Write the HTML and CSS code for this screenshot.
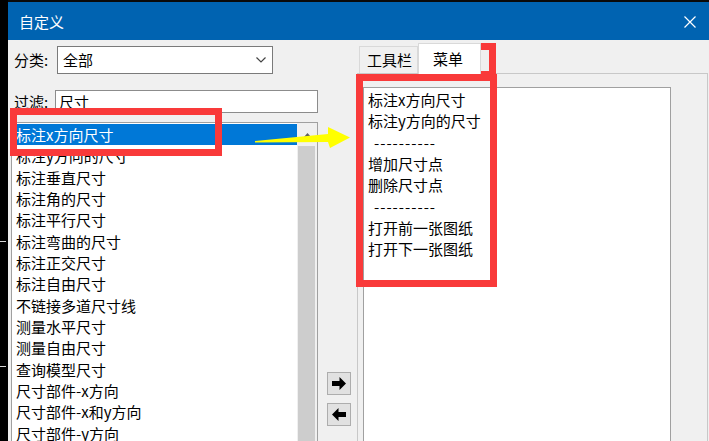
FILE: index.html
```html
<!DOCTYPE html>
<html lang="zh-CN">
<head>
<meta charset="utf-8">
<title>自定义</title>
<link rel="stylesheet" href="styles.css">
</head>
<body>
<div class="desk">
  <div class="strip"><span class="tick"></span><span class="tick tick-2"></span></div>
  <div class="dialog">
    <div class="titlebar">
      <span class="title">自定义</span>
      <span class="close"><svg width="12" height="12" viewBox="0 0 12 12"><path d="M0.5 0.5 L11.5 11.5 M11.5 0.5 L0.5 11.5" stroke="#fff" stroke-width="1.2" fill="none"/></svg></span>
    </div>
    <div class="client">
      <div class="left">
        <div class="field field-cat">
          <span class="label">分类:</span>
          <div class="combo"><span>全部</span><svg width="10" height="6" viewBox="0 0 10 6"><polyline points="0.5,0.5 5,5 9.5,0.5" fill="none" stroke="#444" stroke-width="1.2"/></svg></div>
        </div>
        <div class="field field-filter">
          <span class="label">过滤:</span>
          <div class="textbox">尺寸</div>
        </div>
        <div class="listbox">
          <ul class="items">
            <li class="sel">标注x方向尺寸</li>
            <li>标注y方向的尺寸</li>
            <li>标注垂直尺寸</li>
            <li>标注角的尺寸</li>
            <li>标注平行尺寸</li>
            <li>标注弯曲的尺寸</li>
            <li>标注正交尺寸</li>
            <li>标注自由尺寸</li>
            <li>不链接多道尺寸线</li>
            <li>测量水平尺寸</li>
            <li>测量自由尺寸</li>
            <li>查询模型尺寸</li>
            <li>尺寸部件-x方向</li>
            <li>尺寸部件-x和y方向</li>
            <li>尺寸部件-y方向</li>
          </ul>
          <div class="vscroll">
            <div class="sb-up"><svg width="7" height="4" viewBox="0 0 7 4"><polygon points="0,4 3.5,0 7,4" fill="#606060"/></svg></div>
            <div class="sb-thumb"></div>
          </div>
        </div>
      </div>
      <div class="mid">
        <button class="mv"><svg width="16" height="13" viewBox="0 0 16 13"><path d="M1 4 H8.5 V0 L15 6.5 L8.5 13 V9 H1 Z" fill="#000"/></svg></button>
        <button class="mv"><svg width="16" height="13" viewBox="0 0 16 13"><path d="M15 4 H7.5 V0 L1 6.5 L7.5 13 V9 H15 Z" fill="#000"/></svg></button>
      </div>
      <div class="tabs">
        <div class="tabstrip">
          <div class="tab">工具栏</div>
          <div class="tab tab-active">菜单</div>
        </div>
        <div class="tabpage">
          <ul class="menulist">
            <li>标注x方向尺寸</li>
            <li>标注y方向的尺寸</li>
            <li class="sep">----------</li>
            <li>增加尺寸点</li>
            <li>删除尺寸点</li>
            <li class="sep">----------</li>
            <li>打开前一张图纸</li>
            <li>打开下一张图纸</li>
          </ul>
        </div>
      </div>
    </div>
  </div>
</div>
<div class="mark mark-item"></div>
<div class="mark mark-tab"></div>
<div class="mark mark-menu"></div>
<svg class="pointer" width="105" height="32" viewBox="0 0 105 32"><polygon points="5,21 78,14 78,7 100,17.5 80,28 78,22 5,22.5" fill="#ffff00"/></svg>
</body>
</html>
```

FILE: styles.css
```css
html, body {
  margin: 0;
  padding: 0;
}
body {
  background: #0a0a0a;
  width: 709px;
  height: 441px;
  overflow: hidden;
  position: relative;
  font-family: "Noto Sans CJK SC", "Noto Sans", sans-serif;
  font-size: 15px;
  color: #000;
}
.desk {
  display: flex;
  height: 441px;
}
.strip {
  width: 8px;
  flex: none;
  background: #000;
  padding-top: 241px;
  display: flex;
  flex-direction: column;
  box-sizing: border-box;
}
.tick {
  display: block;
  width: 6px;
  height: 1px;
  background: #d8d8d8;
}
.tick-2 {
  margin-top: 124px;
}
.dialog {
  flex: 1;
  margin-top: 2px;
  display: flex;
  flex-direction: column;
  background: #f0f0f0;
  min-width: 0;
}
.titlebar {
  height: 38px;
  flex: none;
  background: #0063b1;
  color: #fff;
  display: flex;
  align-items: center;
  justify-content: space-between;
  padding: 2px 13px 0 11px;
  box-sizing: border-box;
}
.title {
  font-size: 15px;
  line-height: 20px;
}
.close {
  display: flex;
  width: 12px;
  height: 12px;
}
.client {
  flex: 1;
  display: flex;
  padding-left: 3px;
  min-height: 0;
}
.left {
  width: 307px;
  flex: none;
  display: flex;
  flex-direction: column;
}
.field {
  display: flex;
  align-items: center;
  flex: none;
}
.label {
  width: 43px;
  padding-left: 3px;
  line-height: 20px;
}
.field-cat {
  margin-top: 6px;
  height: 28px;
}
.combo {
  width: 216px;
  height: 28px;
  box-sizing: border-box;
  border: 1px solid #7a7a7a;
  background: #fff;
  display: flex;
  align-items: center;
  justify-content: space-between;
  padding: 0 6px 0 5px;
  line-height: 20px;
}
.field-filter {
  margin-top: 16px;
  height: 23px;
}
.textbox {
  width: 263px;
  height: 23px;
  box-sizing: border-box;
  border: 1px solid #8c8c8c;
  background: #fff;
  padding-left: 3px;
  line-height: 21px;
  flex: none;
}
.listbox {
  margin-top: 9px;
  flex: 1;
  min-height: 0;
  border: 1px solid #a0a0a0;
  border-bottom: none;
  background: #fff;
  display: flex;
  box-sizing: border-box;
  overflow: hidden;
}
.items {
  flex: 1;
  list-style: none;
  margin: 0;
  padding: 1px 0 0 0;
  overflow: hidden;
}
.items li {
  height: 21.33px;
  line-height: 21.33px;
  padding-left: 4px;
  white-space: nowrap;
}
.items li.sel {
  background: #0078d7;
  color: #fff;
}
.vscroll {
  width: 20px;
  flex: none;
  background: #f0f0f0;
  display: flex;
  flex-direction: column;
}
.sb-up {
  height: 23px;
  flex: none;
  display: flex;
  align-items: center;
  justify-content: center;
}
.sb-thumb {
  flex: 1;
  margin: 0 2px 0 1px;
  background: #cdcdcd;
}
.mid {
  width: 39px;
  flex: none;
  display: flex;
  flex-direction: column;
  padding: 332px 0 0 9px;
  box-sizing: border-box;
  gap: 8px;
}
.mv {
  width: 24px;
  height: 23px;
  padding: 0;
  margin: 0;
  border: 1px solid #adadad;
  background: #e1e1e1;
  display: flex;
  align-items: center;
  justify-content: center;
}
.tabs {
  width: 351px;
  flex: none;
  display: flex;
  flex-direction: column;
}
.tabstrip {
  height: 33px;
  flex: none;
  display: flex;
  align-items: flex-end;
  padding-left: 2px;
  position: relative;
  z-index: 1;
}
.tab {
  height: 27px;
  width: 59px;
  box-sizing: border-box;
  border: 1px solid #d9d9d9;
  border-bottom: none;
  background: #f0f0f0;
  padding-left: 7px;
  display: flex;
  align-items: center;
  line-height: 20px;
}
.tab-active {
  height: 31px;
  width: 63px;
  margin-bottom: -1px;
  background: #fff;
  padding-left: 14px;
}
.tabpage {
  flex: 1;
  min-height: 0;
  border: 1px solid #c8c8c8;
  border-bottom: none;
  background: #f0f0f0;
  padding: 13px 36px 0 5px;
  display: flex;
  flex-direction: column;
}
.menulist {
  flex: 1;
  list-style: none;
  margin: 0;
  padding: 1px 0 0 4px;
  border: 1px solid #a0a0a0;
  border-bottom: none;
  background: #fff;
}
.menulist li {
  height: 21.33px;
  line-height: 21.33px;
  white-space: nowrap;
}
.menulist li.sep {
  padding-left: 6px;
  letter-spacing: 1px;
}
.mark {
  position: absolute;
  border: 7px solid #f93a3a;
  box-sizing: border-box;
}
.mark-item {
  left: 10px;
  top: 108px;
  width: 212px;
  height: 48px;
}
.mark-tab {
  left: 419px;
  top: 43px;
  width: 77px;
  height: 35px;
}
.mark-menu {
  left: 356px;
  top: 74px;
  width: 141px;
  height: 213px;
}
.pointer {
  position: absolute;
  left: 250px;
  top: 120px;
}
```
